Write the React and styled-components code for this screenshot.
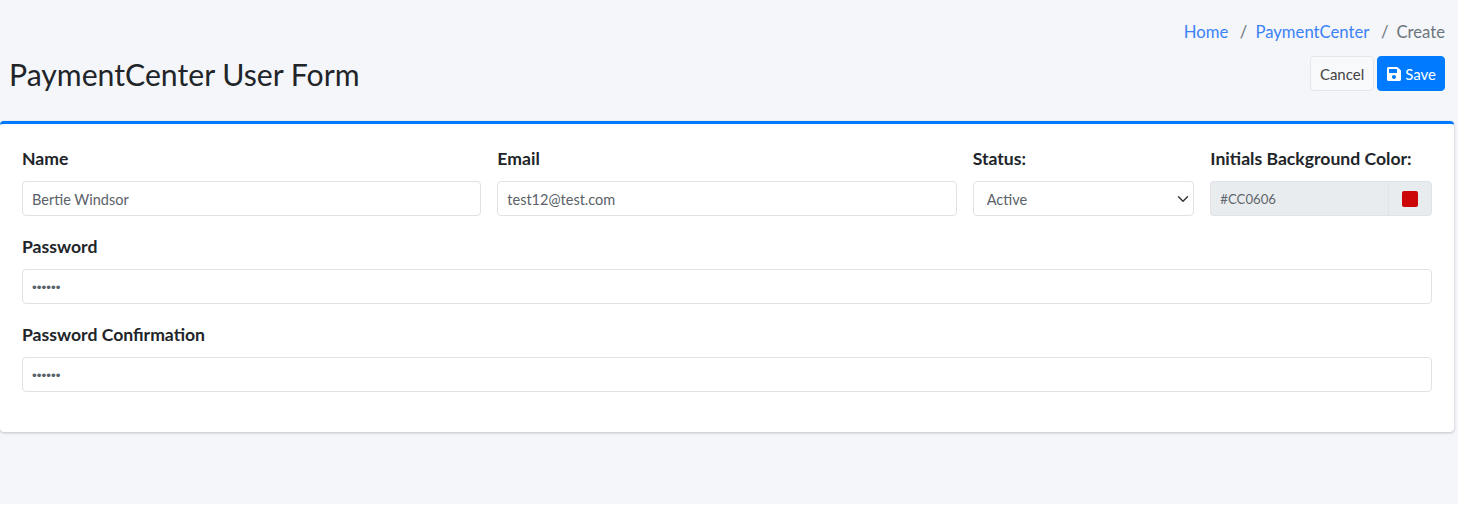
import React from "react";
import styled, { createGlobalStyle } from "styled-components";
import { FaSave } from "react-icons/fa";

const GlobalStyle = createGlobalStyle`
  html, body {
    margin: 0;
    padding: 0;
    background: #fff;
  }
  body {
    font-family: "Lato", "Noto Sans", sans-serif;
    font-size: 16px;
    color: #212529;
  }
`;

const Page = styled.div`
  width: 1458px;
  height: 504px;
  background: #f4f6f9;
  overflow: hidden;
`;

const Header = styled.header`
  display: flex;
  justify-content: space-between;
  align-items: flex-start;
  height: 121px;
  padding: 20px 13px 0 9px;
  box-sizing: border-box;
`;

const Title = styled.h1`
  margin: 34px 0 0;
  font-size: 30.2px;
  font-weight: 400;
  line-height: 40px;
  color: #212529;
`;

const HeaderRight = styled.div`
  display: flex;
  flex-direction: column;
  align-items: flex-end;
`;

const Breadcrumb = styled.nav`
  display: flex;
  align-items: center;
  height: 24px;
  font-size: 16.7px;
  color: #6c757d;
`;

const Crumb = styled.a`
  color: #3b82f6;
  text-decoration: none;
`;

const Separator = styled.span`
  margin: 0 8px 0 11.5px;
  color: #6c757d;
`;

const Actions = styled.div`
  display: flex;
  gap: 3px;
  margin-top: 12px;
`;

const Button = styled.button`
  display: flex;
  align-items: center;
  gap: 3px;
  height: 35px;
  padding: 0 ${(p) => (p.$primary ? "8px" : "9px")};
  box-sizing: border-box;
  border-radius: 4px;
  font-family: inherit;
  font-size: 15px;
  border: 1px solid ${(p) => (p.$primary ? "#007bff" : "#e4e7ea")};
  background: ${(p) => (p.$primary ? "#007bff" : "#f8f9fa")};
  color: ${(p) => (p.$primary ? "#fff" : "#444")};
`;

const Card = styled.section`
  height: 311px;
  width: 1454px;
  box-sizing: border-box;
  padding: 23px 22px 0;
  background: #fff;
  border-top: 3px solid #007bff;
  border-radius: 4px;
  box-shadow: 0 0 1px rgba(0, 0, 0, 0.125), 0 1px 3px rgba(0, 0, 0, 0.2);
`;

const Row = styled.div`
  display: grid;
  grid-template-columns: repeat(6, 1fr);
  column-gap: 16px;
`;

const Field = styled.div`
  grid-column: span ${(p) => p.$span || 6};
  margin-bottom: 19px;
`;

const Label = styled.label`
  display: block;
  height: 24px;
  line-height: 24px;
  margin-bottom: 10px;
  font-size: 17.6px;
  font-weight: 700;
  white-space: nowrap;
  color: #212529;
`;

const Input = styled.input`
  display: block;
  width: 100%;
  height: 35px;
  box-sizing: border-box;
  padding: 1px 9px 0;
  border: 1px solid #dfe2e6;
  border-radius: 4px;
  background: #fff;
  font-family: inherit;
  font-size: 14.5px;
  color: #5a6168;
  outline: none;
`;

const PasswordInput = styled(Input)`
  font-family: "Liberation Sans", sans-serif;
  font-size: 13.5px;
`;

const Select = styled.select`
  display: block;
  width: 100%;
  height: 35px;
  box-sizing: border-box;
  padding: 1px 24px 0 13px;
  border: 1px solid #dfe2e6;
  border-radius: 4px;
  font-family: inherit;
  font-size: 14.5px;
  color: #5a6168;
  appearance: none;
  background: #fff url("data:image/svg+xml,%3csvg xmlns='http://www.w3.org/2000/svg' viewBox='0 0 16 16'%3e%3cpath fill='none' stroke='%23343a40' stroke-linecap='round' stroke-linejoin='round' stroke-width='2' d='M2 5l6 6 6-6'/%3e%3c/svg%3e") no-repeat right 4px center / 12px 12px;
`;

const InputGroup = styled.div`
  display: flex;
  height: 35px;
`;

const ReadOnlyInput = styled(Input)`
  flex: 1;
  min-width: 0;
  background: #e9ecef;
  border-radius: 4px 0 0 4px;
  border-right: 0;
  font-size: 13.2px;
  color: #5f666d;
`;

const Addon = styled.div`
  display: flex;
  align-items: center;
  justify-content: center;
  width: 44px;
  box-sizing: border-box;
  background: #e9ecef;
  border: 1px solid #dfe2e6;
  border-radius: 0 4px 4px 0;
`;

const Swatch = styled.span`
  width: 16px;
  height: 16px;
  border-radius: 2px;
  background: ${(p) => p.$color};
`;

export default function App() {
  return (
    <Page>
      <GlobalStyle />
      <Header>
        <Title>PaymentCenter User Form</Title>
        <HeaderRight>
          <Breadcrumb>
            <Crumb href="#">Home</Crumb>
            <Separator>/</Separator>
            <Crumb href="#">PaymentCenter</Crumb>
            <Separator>/</Separator>
            <span>Create</span>
          </Breadcrumb>
          <Actions>
            <Button type="button">Cancel</Button>
            <Button type="button" $primary>
              <FaSave size={16} />
              Save
            </Button>
          </Actions>
        </HeaderRight>
      </Header>
      <Card>
        <Row>
          <Field $span={2}>
            <Label>Name</Label>
            <Input type="text" defaultValue="Bertie Windsor" />
          </Field>
          <Field $span={2}>
            <Label>Email</Label>
            <Input type="text" defaultValue="test12@test.com" />
          </Field>
          <Field $span={1}>
            <Label>Status:</Label>
            <Select defaultValue="active">
              <option value="active">Active</option>
              <option value="inactive">Inactive</option>
            </Select>
          </Field>
          <Field $span={1}>
            <Label>Initials Background Color:</Label>
            <InputGroup>
              <ReadOnlyInput type="text" readOnly defaultValue="#CC0606" />
              <Addon>
                <Swatch $color="#cc0606" />
              </Addon>
            </InputGroup>
          </Field>
          <Field>
            <Label>Password</Label>
            <PasswordInput type="password" defaultValue="secret" />
          </Field>
          <Field>
            <Label>Password Confirmation</Label>
            <PasswordInput type="password" defaultValue="secret" />
          </Field>
        </Row>
      </Card>
    </Page>
  );
}
